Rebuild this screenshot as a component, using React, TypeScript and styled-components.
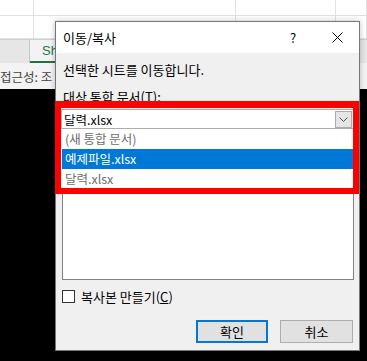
import React from 'react';
import styled, { createGlobalStyle } from 'styled-components';

const GlobalStyle = createGlobalStyle`
  html, body {
    margin: 0;
    padding: 0;
    background: #000;
  }
  body {
    font-family: "Noto Sans CJK KR", "Noto Sans", sans-serif;
    font-size: 13px;
    color: #000;
  }
`;

const Screen = styled.div`
  position: relative;
  width: 367px;
  height: 361px;
  overflow: hidden;
  background: #000;
`;

// excel window behind the dialog
const Workbook = styled.div`
  display: flex;
  flex-direction: column;
`;

const Grid = styled.div`
  display: grid;
  grid-template-columns: 34px 202px 100px 1fr;
  grid-template-rows: 16px 23px;
  background: #fff;
`;

const Cell = styled.div`
  border-right: solid 1px #e1e1e1;
  border-bottom: solid 1px #e1e1e1;
`;

const TabBar = styled.div`
  height: 24px;
  display: flex;
  background: #e6e6e6;
  border-top: solid 1px #cfcfcf;
  box-sizing: border-box;
`;

const TabSpacer = styled.div`
  width: 29px;
  border-right: solid 1px #c6c6c6;
`;

// only the start of the tab shows left of the dialog
const SheetTab = styled.div`
  width: 30px;
  overflow: hidden;
  white-space: nowrap;
  padding-left: 12px;
  box-sizing: border-box;
  background: #f3f3f3;
  color: #217346;
  font-family: "Liberation Sans", sans-serif;
  font-size: 13px;
  line-height: 21px;
  border-bottom: solid 2px #217346;
`;

const StatusBar = styled.div`
  height: 26px;
  background: #f3f3f3;
`;

const StatusText = styled.div`
  width: 55px;
  overflow: hidden;
  color: #444;
  font-size: 12.5px;
  line-height: 28px;
  white-space: nowrap;
`;

// move / copy dialog
const Dialog = styled.div`
  position: absolute;
  left: 55px;
  top: 21px;
  width: 305px;
  height: 330px;
  box-sizing: border-box;
  border: solid 1px #767676;
  background: #f0f0f0;
  display: flex;
  flex-direction: column;
  box-shadow: 0 0 6px rgba(0, 0, 0, 0.25);
`;

const TitleBar = styled.div`
  height: 31px;
  flex-shrink: 0;
  display: flex;
  align-items: center;
  background: #fff;
  padding-left: 7px;
`;

const Title = styled.span`
  flex: 1;
`;

const TitleButton = styled.div`
  width: 44px;
  height: 31px;
  display: flex;
  align-items: center;
  justify-content: center;
  font-size: 13px;
`;

const Body = styled.div`
  flex: 1;
  display: flex;
  flex-direction: column;
  padding: 0 5px;
`;

const Label = styled.div<{ gap: number }>`
  margin-top: ${(p) => p.gap}px;
  padding-left: 2px;
  height: 16px;
  line-height: 16px;
  white-space: nowrap;
`;

const Combo = styled.div`
  margin-top: 4px;
  height: 20px;
  box-sizing: border-box;
  display: flex;
  align-items: center;
  padding-left: 2px;
  background: #fff;
  border: solid 1px #adadad;
  font-size: 12.5px;
`;

const ComboText = styled.span`
  flex: 1;
`;

const DropButton = styled.div`
  width: 17px;
  height: 17px;
  box-sizing: border-box;
  margin-right: 1px;
  display: flex;
  align-items: center;
  justify-content: center;
  background: #e5e5e5;
  border: solid 1px #acacac;
`;

const SheetList = styled.div`
  position: relative;
  height: 151px;
  margin-left: 1px;
  box-sizing: border-box;
  background: #fff;
  border: solid 1px #828282;
  border-top: none;
`;

const Popup = styled.div`
  position: absolute;
  top: 0;
  left: -1px;
  right: -1px;
  background: #fff;
  display: flex;
  flex-direction: column;
`;

const Option = styled.div<{ selected?: boolean }>`
  height: 20px;
  line-height: 20px;
  padding-left: 3px;
  font-size: 12.5px;
  color: ${(p) => (p.selected ? '#fff' : '#6d6d6d')};
  background: ${(p) => (p.selected ? '#0078d7' : 'transparent')};
`;

const CheckRow = styled.label`
  margin-top: 10px;
  display: flex;
  align-items: center;
  height: 13px;
  padding-left: 1px;
  gap: 6px;
`;

const CheckBox = styled.span`
  width: 13px;
  height: 13px;
  box-sizing: border-box;
  border: solid 1px #333;
  background: #fff;
`;

const Underline = styled.span`
  text-decoration: underline;
`;

const ButtonRow = styled.div`
  margin-top: 17px;
  display: flex;
  justify-content: flex-end;
  gap: 12px;
  padding-right: 1px;
`;

const Button = styled.div<{ primary?: boolean; width: number }>`
  width: ${(p) => p.width}px;
  height: 23px;
  box-sizing: border-box;
  display: flex;
  align-items: center;
  justify-content: center;
  background: #e1e1e1;
  border: solid ${(p) => (p.primary ? '2px #0078d7' : '1px #adadad')};
`;

// red annotation round the workbook picker
const Highlight = styled.div`
  position: absolute;
  left: 55px;
  top: 101px;
  width: 304px;
  height: 93px;
  box-sizing: border-box;
  border: solid 6px #ff0000;
  border-top-width: 7px;
`;

const Chevron = () => (
  <svg width="9" height="5" viewBox="0 0 9 5">
    <path d="M0.5 0.5 L4.5 4.5 L8.5 0.5" fill="none" stroke="#555" strokeWidth="1" />
  </svg>
);

const CloseIcon = () => (
  <svg width="11" height="11" viewBox="0 0 11 11">
    <path d="M0.5 0.5 L10.5 10.5 M10.5 0.5 L0.5 10.5" stroke="#000" strokeWidth="1" />
  </svg>
);

const App = () => (
  <Screen>
    <GlobalStyle />
    <Workbook>
      <Grid>
        {Array.from({ length: 8 }).map((_, i) => (
          <Cell key={i} />
        ))}
      </Grid>
      <TabBar>
        <TabSpacer />
        <SheetTab>Sh</SheetTab>
      </TabBar>
      <StatusBar>
        <StatusText>접근성: 조</StatusText>
      </StatusBar>
    </Workbook>

    <Dialog>
      <TitleBar>
        <Title>이동/복사</Title>
        <TitleButton>?</TitleButton>
        <TitleButton>
          <CloseIcon />
        </TitleButton>
      </TitleBar>
      <Body>
        <Label gap={9}>선택한 시트를 이동합니다.</Label>
        <Label gap={11}>
          대상 통합 문서(<Underline>T</Underline>):
        </Label>
        <Combo>
          <ComboText>달력.xlsx</ComboText>
          <DropButton>
            <Chevron />
          </DropButton>
        </Combo>
        <SheetList>
          <Popup>
            <Option>(새 통합 문서)</Option>
            <Option selected>예제파일.xlsx</Option>
            <Option>달력.xlsx</Option>
          </Popup>
        </SheetList>
        <CheckRow>
          <CheckBox />
          <span>
            복사본 만들기(<Underline>C</Underline>)
          </span>
        </CheckRow>
        <ButtonRow>
          <Button primary width={72}>확인</Button>
          <Button width={73}>취소</Button>
        </ButtonRow>
      </Body>
    </Dialog>

    <Highlight />
  </Screen>
);

export default App;
